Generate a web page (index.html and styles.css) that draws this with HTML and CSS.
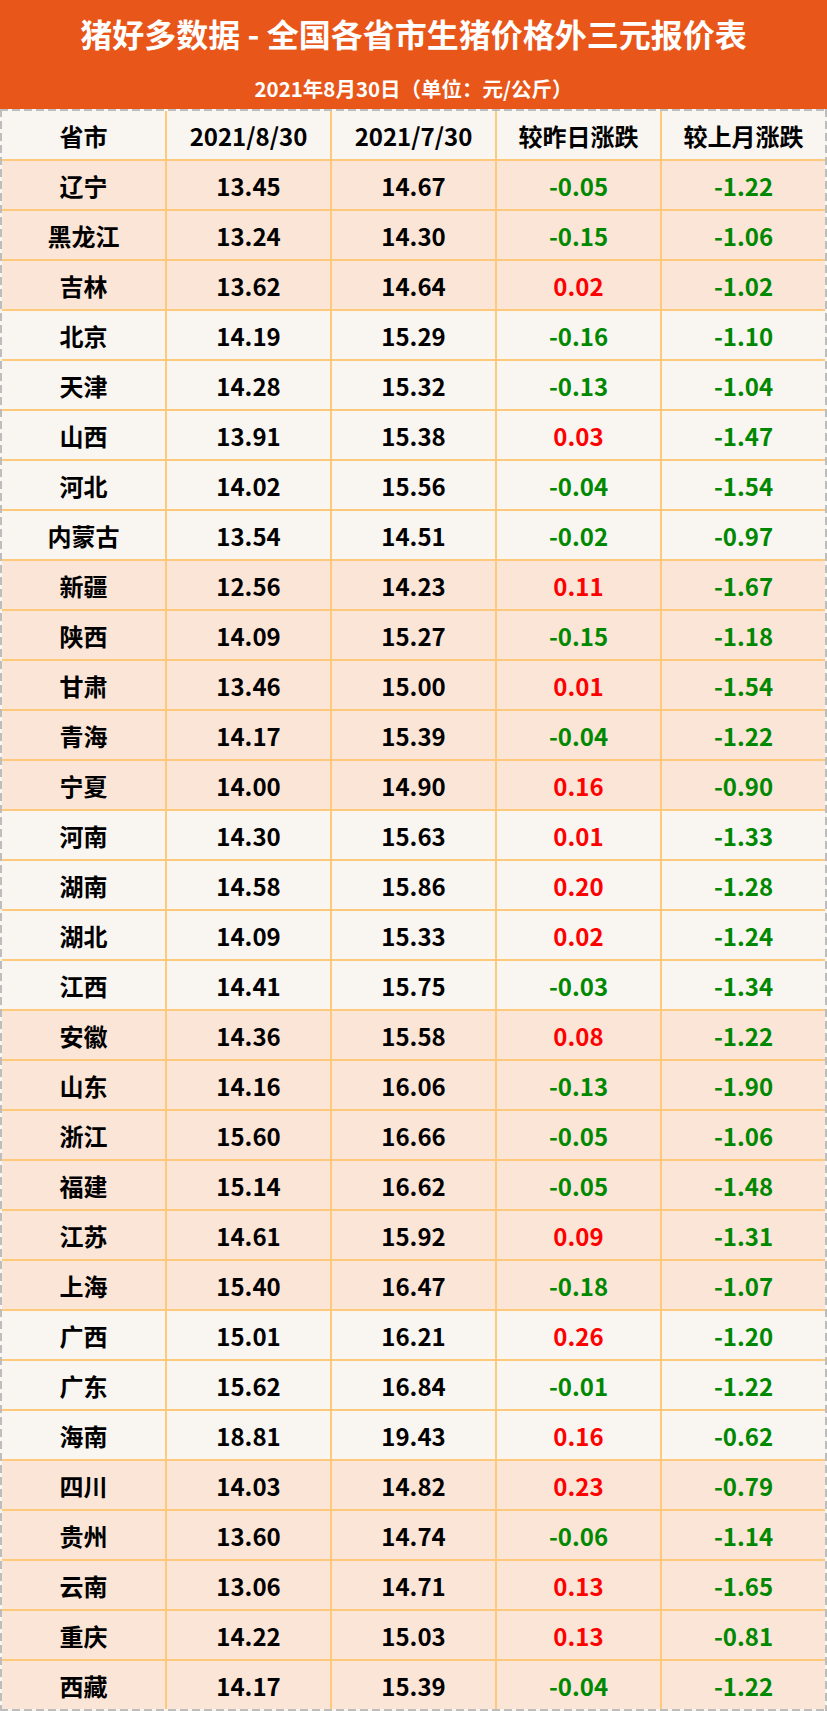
FILE: index.html
```html
<!DOCTYPE html>
<html lang="zh-CN">
<head>
<meta charset="utf-8">
<title>猪好多数据 - 全国各省市生猪价格外三元报价表</title>
<link rel="stylesheet" href="styles.css">
</head>
<body>
<div class="page">
  <header class="banner">
    <h1 class="banner-title">猪好多数据 - 全国各省市生猪价格外三元报价表</h1>
    <p class="banner-sub">2021年8月30日（单位：元/公斤）</p>
  </header>
  <div class="sheet">
    <div class="grid">
      <div class="row head"><div class="cell">省市</div><div class="cell">2021/8/30</div><div class="cell">2021/7/30</div><div class="cell">较昨日涨跌</div><div class="cell">较上月涨跌</div></div>
      <div class="row peach"><div class="cell">辽宁</div><div class="cell">13.45</div><div class="cell">14.67</div><div class="cell down">-0.05</div><div class="cell down">-1.22</div></div>
      <div class="row peach"><div class="cell">黑龙江</div><div class="cell">13.24</div><div class="cell">14.30</div><div class="cell down">-0.15</div><div class="cell down">-1.06</div></div>
      <div class="row peach"><div class="cell">吉林</div><div class="cell">13.62</div><div class="cell">14.64</div><div class="cell up">0.02</div><div class="cell down">-1.02</div></div>
      <div class="row light"><div class="cell">北京</div><div class="cell">14.19</div><div class="cell">15.29</div><div class="cell down">-0.16</div><div class="cell down">-1.10</div></div>
      <div class="row light"><div class="cell">天津</div><div class="cell">14.28</div><div class="cell">15.32</div><div class="cell down">-0.13</div><div class="cell down">-1.04</div></div>
      <div class="row light"><div class="cell">山西</div><div class="cell">13.91</div><div class="cell">15.38</div><div class="cell up">0.03</div><div class="cell down">-1.47</div></div>
      <div class="row light"><div class="cell">河北</div><div class="cell">14.02</div><div class="cell">15.56</div><div class="cell down">-0.04</div><div class="cell down">-1.54</div></div>
      <div class="row light"><div class="cell">内蒙古</div><div class="cell">13.54</div><div class="cell">14.51</div><div class="cell down">-0.02</div><div class="cell down">-0.97</div></div>
      <div class="row peach"><div class="cell">新疆</div><div class="cell">12.56</div><div class="cell">14.23</div><div class="cell up">0.11</div><div class="cell down">-1.67</div></div>
      <div class="row peach"><div class="cell">陕西</div><div class="cell">14.09</div><div class="cell">15.27</div><div class="cell down">-0.15</div><div class="cell down">-1.18</div></div>
      <div class="row peach"><div class="cell">甘肃</div><div class="cell">13.46</div><div class="cell">15.00</div><div class="cell up">0.01</div><div class="cell down">-1.54</div></div>
      <div class="row peach"><div class="cell">青海</div><div class="cell">14.17</div><div class="cell">15.39</div><div class="cell down">-0.04</div><div class="cell down">-1.22</div></div>
      <div class="row peach"><div class="cell">宁夏</div><div class="cell">14.00</div><div class="cell">14.90</div><div class="cell up">0.16</div><div class="cell down">-0.90</div></div>
      <div class="row light"><div class="cell">河南</div><div class="cell">14.30</div><div class="cell">15.63</div><div class="cell up">0.01</div><div class="cell down">-1.33</div></div>
      <div class="row light"><div class="cell">湖南</div><div class="cell">14.58</div><div class="cell">15.86</div><div class="cell up">0.20</div><div class="cell down">-1.28</div></div>
      <div class="row light"><div class="cell">湖北</div><div class="cell">14.09</div><div class="cell">15.33</div><div class="cell up">0.02</div><div class="cell down">-1.24</div></div>
      <div class="row light"><div class="cell">江西</div><div class="cell">14.41</div><div class="cell">15.75</div><div class="cell down">-0.03</div><div class="cell down">-1.34</div></div>
      <div class="row peach"><div class="cell">安徽</div><div class="cell">14.36</div><div class="cell">15.58</div><div class="cell up">0.08</div><div class="cell down">-1.22</div></div>
      <div class="row peach"><div class="cell">山东</div><div class="cell">14.16</div><div class="cell">16.06</div><div class="cell down">-0.13</div><div class="cell down">-1.90</div></div>
      <div class="row peach"><div class="cell">浙江</div><div class="cell">15.60</div><div class="cell">16.66</div><div class="cell down">-0.05</div><div class="cell down">-1.06</div></div>
      <div class="row peach"><div class="cell">福建</div><div class="cell">15.14</div><div class="cell">16.62</div><div class="cell down">-0.05</div><div class="cell down">-1.48</div></div>
      <div class="row peach"><div class="cell">江苏</div><div class="cell">14.61</div><div class="cell">15.92</div><div class="cell up">0.09</div><div class="cell down">-1.31</div></div>
      <div class="row peach"><div class="cell">上海</div><div class="cell">15.40</div><div class="cell">16.47</div><div class="cell down">-0.18</div><div class="cell down">-1.07</div></div>
      <div class="row light"><div class="cell">广西</div><div class="cell">15.01</div><div class="cell">16.21</div><div class="cell up">0.26</div><div class="cell down">-1.20</div></div>
      <div class="row light"><div class="cell">广东</div><div class="cell">15.62</div><div class="cell">16.84</div><div class="cell down">-0.01</div><div class="cell down">-1.22</div></div>
      <div class="row light"><div class="cell">海南</div><div class="cell">18.81</div><div class="cell">19.43</div><div class="cell up">0.16</div><div class="cell down">-0.62</div></div>
      <div class="row peach"><div class="cell">四川</div><div class="cell">14.03</div><div class="cell">14.82</div><div class="cell up">0.23</div><div class="cell down">-0.79</div></div>
      <div class="row peach"><div class="cell">贵州</div><div class="cell">13.60</div><div class="cell">14.74</div><div class="cell down">-0.06</div><div class="cell down">-1.14</div></div>
      <div class="row peach"><div class="cell">云南</div><div class="cell">13.06</div><div class="cell">14.71</div><div class="cell up">0.13</div><div class="cell down">-1.65</div></div>
      <div class="row peach"><div class="cell">重庆</div><div class="cell">14.22</div><div class="cell">15.03</div><div class="cell up">0.13</div><div class="cell down">-0.81</div></div>
      <div class="row peach"><div class="cell">西藏</div><div class="cell">14.17</div><div class="cell">15.39</div><div class="cell down">-0.04</div><div class="cell down">-1.22</div></div>
    </div>
  </div>
</div>
</body>
</html>
```

FILE: styles.css
```css
html, body {
  margin: 0;
  padding: 0;
  background: #ffffff;
}

.page {
  width: 827px;
  font-family: "Noto Sans CJK SC", "Noto Sans", sans-serif;
  font-weight: 700;
}

.banner {
  background: #e9561a;
  height: 109px;
  display: flex;
  flex-direction: column;
  align-items: center;
  color: #ffffff;
}

.banner-title {
  margin: 13px 0 0 0;
  font-size: 32px;
  line-height: 40px;
  font-weight: 700;
}

.banner-sub {
  margin: 22px 0 0 0;
  font-size: 20.5px;
  line-height: 26px;
  font-weight: 700;
}

.sheet {
  padding: 2px;
  background-color: #f9f5f1;
  background-image:
    repeating-linear-gradient(90deg, #bdbdbd 0 8px, transparent 8px 12px),
    repeating-linear-gradient(90deg, #bdbdbd 0 8px, transparent 8px 12px),
    repeating-linear-gradient(180deg, #bdbdbd 0 8px, transparent 8px 12px),
    repeating-linear-gradient(180deg, #bdbdbd 0 8px, transparent 8px 12px);
  background-size: 100% 2px, 100% 2px, 2px 100%, 2px 100%;
  background-position: top left, bottom left, top left, top right;
  background-repeat: no-repeat;
}

.grid {
  display: flex;
  flex-direction: column;
  gap: 2px;
  background: #ffc97c;
}

.row {
  display: grid;
  grid-template-columns: repeat(5, 1fr);
  column-gap: 2px;
  height: 48px;
}

.cell {
  display: flex;
  align-items: center;
  justify-content: center;
  font-size: 24px;
  color: #000000;
}

.head .cell { background: #f9f5f1; font-size: 24px; }
.light .cell { background: #f9f5f1; }
.peach .cell { background: #fbe5d7; }

.cell.down { color: #008800; }
.cell.up { color: #ff0000; }
```
